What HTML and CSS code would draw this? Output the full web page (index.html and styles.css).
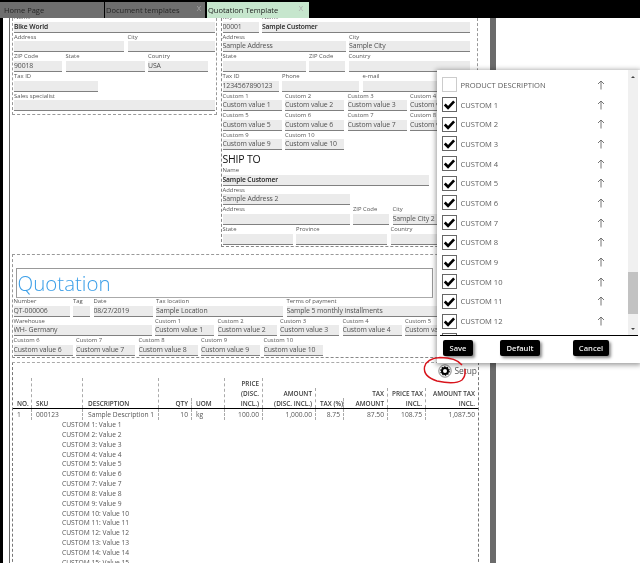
FILE: index.html
```html
<!DOCTYPE html>
<html lang="en">
<head>
<meta charset="utf-8">
<title>Quotation Template</title>
<link rel="stylesheet" href="styles.css">
</head>
<body>
<header class="tabs">
  <div class="tab tab-home">Home Page</div>
  <div class="tab tab-docs">Document templates<span class="close">X</span></div>
  <div class="tab tab-active">Quotation Template<span class="close">X</span></div>
</header>
<main class="main">
  <div class="edge-left"></div>
  <div class="page">
    <div class="top">
      <section class="block-left">
        <div class="row"><div class="f w201 strong"><span class="l">Name</span><span class="v">Bike World</span></div></div>
        <div class="row"><div class="f w110"><span class="l">Address</span><span class="v"></span></div><div class="f w87"><span class="l">City</span><span class="v"></span></div></div>
        <div class="row"><div class="f w48"><span class="l">ZIP Code</span><span class="v">90018</span></div><div class="f w79"><span class="l">State</span><span class="v"></span></div><div class="f w60"><span class="l">Country</span><span class="v">USA</span></div></div>
        <div class="row"><div class="f w84"><span class="l">Tax ID</span><span class="v"></span></div></div>
        <div class="row"><div class="f w201"><span class="l">Sales specialist</span><span class="v"></span></div></div>
      </section>
      <section class="block-right">
        <div class="row"><div class="f w36"><span class="l">Key</span><span class="v">00001</span></div><div class="f w208 strong"><span class="l">Name</span><span class="v">Sample Customer</span></div></div>
        <div class="row"><div class="f w123"><span class="l">Address</span><span class="v">Sample Address</span></div><div class="f w121"><span class="l">City</span><span class="v">Sample City</span></div></div>
        <div class="row"><div class="f w83"><span class="l">State</span><span class="v"></span></div><div class="f w36"><span class="l">ZIP Code</span><span class="v"></span></div><div class="f w121"><span class="l">Country</span><span class="v"></span></div></div>
        <div class="row"><div class="f w56"><span class="l">Tax ID</span><span class="v">1234567890123</span></div><div class="f w77"><span class="l">Phone</span><span class="v"></span></div><div class="f w108"><span class="l">e-mail</span><span class="v"></span></div></div>
        <div class="row"><div class="f w59"><span class="l">Custom 1</span><span class="v">Custom value 1</span></div><div class="f w59"><span class="l">Custom 2</span><span class="v">Custom value 2</span></div><div class="f w59"><span class="l">Custom 3</span><span class="v">Custom value 3</span></div><div class="f w59"><span class="l">Custom 4</span><span class="v">Custom value 4</span></div></div>
        <div class="row"><div class="f w59"><span class="l">Custom 5</span><span class="v">Custom value 5</span></div><div class="f w59"><span class="l">Custom 6</span><span class="v">Custom value 6</span></div><div class="f w59"><span class="l">Custom 7</span><span class="v">Custom value 7</span></div><div class="f w59"><span class="l">Custom 8</span><span class="v">Custom value 8</span></div></div>
        <div class="row"><div class="f w59"><span class="l">Custom 9</span><span class="v">Custom value 9</span></div><div class="f w59"><span class="l">Custom 10</span><span class="v">Custom value 10</span></div></div>
        <h2 class="ship">SHIP TO</h2>
        <div class="row"><div class="f w206 strong"><span class="l">Name</span><span class="v">Sample Customer</span></div></div>
        <div class="row"><div class="f w127"><span class="l">Address</span><span class="v">Sample Address 2</span></div></div>
        <div class="row"><div class="f w127"><span class="l">Address</span><span class="v"></span></div><div class="f w36"><span class="l">ZIP Code</span><span class="v"></span></div><div class="f w60"><span class="l">City</span><span class="v">Sample City 2</span></div></div>
        <div class="row"><div class="f w70"><span class="l">State</span><span class="v"></span></div><div class="f w91"><span class="l">Province</span><span class="v"></span></div><div class="f w60"><span class="l">Country</span><span class="v"></span></div></div>
      </section>
    </div>
    <section class="quote">
      <div class="title-box"><h1 class="title">Quotation</h1></div>
      <div class="row"><div class="f w56"><span class="l">Number</span><span class="v">QT-000006</span></div><div class="f w17"><span class="l">Tag</span><span class="v"></span></div><div class="f w59"><span class="l">Date</span><span class="v">08/27/2019</span></div><div class="f w127"><span class="l">Tax location</span><span class="v">Sample Location</span></div><div class="f w178"><span class="l">Terms of payment</span><span class="v">Sample 5 monthly installments</span></div></div>
      <div class="row"><div class="f w138"><span class="l">Warehouse</span><span class="v">WH- Germany</span></div><div class="f w59"><span class="l">Custom 1</span><span class="v">Custom value 1</span></div><div class="f w59"><span class="l">Custom 2</span><span class="v">Custom value 2</span></div><div class="f w59"><span class="l">Custom 3</span><span class="v">Custom value 3</span></div><div class="f w59"><span class="l">Custom 4</span><span class="v">Custom value 4</span></div><div class="f w59"><span class="l">Custom 5</span><span class="v">Custom value 5</span></div></div>
      <div class="row"><div class="f w59"><span class="l">Custom 6</span><span class="v">Custom value 6</span></div><div class="f w59"><span class="l">Custom 7</span><span class="v">Custom value 7</span></div><div class="f w59"><span class="l">Custom 8</span><span class="v">Custom value 8</span></div><div class="f w59"><span class="l">Custom 9</span><span class="v">Custom value 9</span></div><div class="f w59"><span class="l">Custom 10</span><span class="v">Custom value 10</span></div></div>
    </section>
    <section class="lines">
      <div class="setup">
        <svg class="gear" viewBox="0 0 14 14" width="14" height="14" aria-hidden="true"><circle cx="7" cy="7" r="6.2" fill="none" stroke="#666" stroke-width=".8"/><circle cx="7" cy="7" r="3" fill="none" stroke="#000" stroke-width="2"/><circle cx="7" cy="7" r="4.3" fill="none" stroke="#000" stroke-width="1.1" stroke-dasharray="1.35 1.35"/></svg>
        <span>Setup</span>
      </div>
      <div class="grid head">
        <div class="c">NO.</div><div class="c">SKU</div><div class="c desc">DESCRIPTION</div><div class="c r">QTY</div><div class="c">UOM</div><div class="c r">PRICE<br>(DISC.<br>INCL.)</div><div class="c r">AMOUNT<br>(DISC. INCL.)</div><div class="c r">TAX (%)</div><div class="c r">TAX<br>AMOUNT</div><div class="c r">PRICE TAX<br>INCL.</div><div class="c r">AMOUNT TAX<br>INCL.</div>
      </div>
      <div class="grid body-row">
        <div class="c">1</div><div class="c">000123</div><div class="c desc">Sample Description 1</div><div class="c r">10</div><div class="c">kg</div><div class="c r">100.00</div><div class="c r">1,000.00</div><div class="c r">8.75</div><div class="c r">87.50</div><div class="c r">108.75</div><div class="c r">1,087.50</div>
      </div>
      <ul class="customs">
        <li>CUSTOM 1: Value 1</li><li>CUSTOM 2: Value 2</li><li>CUSTOM 3: Value 3</li><li>CUSTOM 4: Value 4</li><li>CUSTOM 5: Value 5</li><li>CUSTOM 6: Value 6</li><li>CUSTOM 7: Value 7</li><li>CUSTOM 8: Value 8</li><li>CUSTOM 9: Value 9</li><li>CUSTOM 10: Value 10</li><li>CUSTOM 11: Value 11</li><li>CUSTOM 12: Value 12</li><li>CUSTOM 13: Value 13</li><li>CUSTOM 14: Value 14</li><li>CUSTOM 15: Value 15</li>
      </ul>
    </section>
  </div>
  <div class="edge-right"></div>
</main>

<aside class="popup">
  <div class="list-wrap">
    <ul class="list">
      <li class="item"><span class="box"></span><span class="name">PRODUCT DESCRIPTION</span><svg class="up" viewBox="0 0 8 10" width="8" height="10"><path d="M4 9.5V1M1 4l3-3 3 3"/></svg></li>
      <li class="item"><span class="box"><svg viewBox="0 0 15 15"><path d="M2 7.500l3.800 3.800 7-7.500"/></svg></span><span class="name">CUSTOM 1</span><svg class="up" viewBox="0 0 8 10" width="8" height="10"><path d="M4 9.5V1M1 4l3-3 3 3"/></svg></li>
      <li class="item"><span class="box"><svg viewBox="0 0 15 15"><path d="M2 7.500l3.800 3.800 7-7.500"/></svg></span><span class="name">CUSTOM 2</span><svg class="up" viewBox="0 0 8 10" width="8" height="10"><path d="M4 9.5V1M1 4l3-3 3 3"/></svg></li>
      <li class="item"><span class="box"><svg viewBox="0 0 15 15"><path d="M2 7.500l3.800 3.800 7-7.500"/></svg></span><span class="name">CUSTOM 3</span><svg class="up" viewBox="0 0 8 10" width="8" height="10"><path d="M4 9.5V1M1 4l3-3 3 3"/></svg></li>
      <li class="item"><span class="box"><svg viewBox="0 0 15 15"><path d="M2 7.500l3.800 3.800 7-7.500"/></svg></span><span class="name">CUSTOM 4</span><svg class="up" viewBox="0 0 8 10" width="8" height="10"><path d="M4 9.5V1M1 4l3-3 3 3"/></svg></li>
      <li class="item"><span class="box"><svg viewBox="0 0 15 15"><path d="M2 7.500l3.800 3.800 7-7.500"/></svg></span><span class="name">CUSTOM 5</span><svg class="up" viewBox="0 0 8 10" width="8" height="10"><path d="M4 9.5V1M1 4l3-3 3 3"/></svg></li>
      <li class="item"><span class="box"><svg viewBox="0 0 15 15"><path d="M2 7.500l3.800 3.800 7-7.500"/></svg></span><span class="name">CUSTOM 6</span><svg class="up" viewBox="0 0 8 10" width="8" height="10"><path d="M4 9.5V1M1 4l3-3 3 3"/></svg></li>
      <li class="item"><span class="box"><svg viewBox="0 0 15 15"><path d="M2 7.500l3.800 3.800 7-7.500"/></svg></span><span class="name">CUSTOM 7</span><svg class="up" viewBox="0 0 8 10" width="8" height="10"><path d="M4 9.5V1M1 4l3-3 3 3"/></svg></li>
      <li class="item"><span class="box"><svg viewBox="0 0 15 15"><path d="M2 7.500l3.800 3.800 7-7.500"/></svg></span><span class="name">CUSTOM 8</span><svg class="up" viewBox="0 0 8 10" width="8" height="10"><path d="M4 9.5V1M1 4l3-3 3 3"/></svg></li>
      <li class="item"><span class="box"><svg viewBox="0 0 15 15"><path d="M2 7.500l3.800 3.800 7-7.500"/></svg></span><span class="name">CUSTOM 9</span><svg class="up" viewBox="0 0 8 10" width="8" height="10"><path d="M4 9.5V1M1 4l3-3 3 3"/></svg></li>
      <li class="item"><span class="box"><svg viewBox="0 0 15 15"><path d="M2 7.500l3.800 3.800 7-7.500"/></svg></span><span class="name">CUSTOM 10</span><svg class="up" viewBox="0 0 8 10" width="8" height="10"><path d="M4 9.5V1M1 4l3-3 3 3"/></svg></li>
      <li class="item"><span class="box"><svg viewBox="0 0 15 15"><path d="M2 7.500l3.800 3.800 7-7.500"/></svg></span><span class="name">CUSTOM 11</span><svg class="up" viewBox="0 0 8 10" width="8" height="10"><path d="M4 9.5V1M1 4l3-3 3 3"/></svg></li>
      <li class="item"><span class="box"><svg viewBox="0 0 15 15"><path d="M2 7.500l3.800 3.800 7-7.500"/></svg></span><span class="name">CUSTOM 12</span><svg class="up" viewBox="0 0 8 10" width="8" height="10"><path d="M4 9.5V1M1 4l3-3 3 3"/></svg></li>
      <li class="item"><span class="box"></span><span class="name"></span></li>
    </ul>
    <div class="scrollbar"><span class="tri tri-up"></span><span class="thumb"></span><span class="tri tri-down"></span></div>
  </div>
  <div class="actions">
    <button class="btn btn-save">Save</button>
    <button class="btn btn-default">Default</button>
    <button class="btn btn-cancel">Cancel</button>
  </div>
</aside>

<svg class="scribble" viewBox="0 0 640 563" aria-hidden="true"><path d="M462 365C458 360 450 357.500 440 357.500C432 358 426 361 424.500 367C423.500 373 428 378 437 381C446 383 457 383.500 462 380C465 377 465.500 373 465 369"/></svg>
</body>
</html>
```
FILE: styles.css
```css
* { box-sizing: border-box; }
html, body { margin: 0; padding: 0; }
body {
  position: relative;
  width: 640px;
  height: 563px;
  overflow: hidden;
  background: #fff;
  font-family: "Open Sans", "Noto Sans", sans-serif;
  color: #555;
}

/* The reference is a soft, upscaled capture */
.tabs, .main, .popup { filter: blur(.3px); }

/* Tabs */
.tabs {
  position: relative;
  z-index: 1;
  display: flex;
  height: 18px;
  padding-top: 2px;
  gap: 1px;
  background: #000;
}
.tab {
  position: relative;
  display: flex;
  align-items: center;
  height: 16px;
  padding-left: 1px;
  font-size: 7.5px;
  color: #262626;
  background: #6e6e6e;
}
.tab-home { width: 104px; padding-left: 4px; }
.tab-docs { width: 100px; }
.tab-active { width: 102px; margin-left: 1px; background: #c6e6cd; color: #1c1c1c; }
.close {
  position: absolute;
  right: 4px;
  top: 0;
  font-size: 7.5px;
  line-height: 12px;
  color: #a9a9a9;
}
.tab-active .close { right: 6px; }

/* Frame */
.main { display: flex; height: 545px; overflow: hidden; }
.edge-left { width: 3px; background: #000; flex: none; }
.page {
  flex: none;
  width: 481px;
  margin-left: 6px;
  margin-top: -6px;
  padding-left: 2px;
  border-left: 1px solid #666;
}
.edge-right { width: 6px; flex: none; background: #6b6b6b; }

/* Field rows */
.row { display: flex; gap: 3.5px; height: 19.65px; align-items: flex-end; flex: none; }
.f { display: flex; flex-direction: column; flex: none; }
.l {
  display: block;
  height: 8.65px;
  line-height: 8.5px;
  font-size: 5.9px;
  color: #555;
  white-space: nowrap;
}
.v {
  display: block;
  height: 11px;
  line-height: 10px;
  font-size: 6.9px;
  letter-spacing: -.1px;
  color: #505050;
  white-space: nowrap;
  overflow: hidden;
  background: #ebebeb;
  border-bottom: 1px solid #808080;
}
.strong .v { color: #222; font-weight: 600; font-size: 6.7px; }
.w17 { width: 17px; } .w36 { width: 36px; } .w48 { width: 48px; } .w56 { width: 56px; }
.w59 { width: 59px; } .w60 { width: 60px; } .w70 { width: 70px; } .w77 { width: 77px; }
.w79 { width: 79px; } .w83 { width: 83px; } .w84 { width: 84px; } .w87 { width: 87px; }
.w91 { width: 91px; } .w108 { width: 108px; } .w110 { width: 110px; } .w121 { width: 121px; }
.w123 { width: 123px; } .w127 { width: 127px; } .w138 { width: 138px; } .w178 { width: 178px; }
.w201 { width: 201px; } .w206 { width: 206px; } .w208 { width: 208px; }

/* Header blocks */
.top { display: flex; align-items: flex-start; gap: 4px; height: 242px; padding-top: 1px; }
.block-left {
  width: 205px;
  height: 102px;
  padding-left: 1px;
  border: 1px dashed #999;
  border-top: 0;
}
.block-right {
  width: 257px;
  height: 234px;
  padding-left: .5px;
  border-left: 1px dashed #888;
  border-right: 1px dashed #999;
  border-bottom: 1px dashed #888;
}
.ship {
  margin: 0;
  height: 15.5px;
  line-height: 19px;
  font-size: 10.5px;
  font-weight: 400;
  color: #111;
  letter-spacing: -.2px;
}

/* Quotation */
.quote {
  width: 466px;
  height: 104px;
  padding: 13px 0 0 .5px;
  border-top: 1px dashed #999;
  border-left: 1px dashed #999;
  border-bottom: 1px dashed #888;
}
.title-box {
  width: 417px;
  height: 30px;
  margin-left: 2px;
  margin-bottom: -1px;
  border: 1px solid #999;
  border-bottom-color: #aaa;
}
.title {
  margin: 0;
  padding-left: 1px;
  font-size: 20.500px;
  line-height: 28px;
  font-weight: 300;
  color: #3c9fe8;
}

/* Lines */
.lines {
  position: relative;
  width: 467px;
  height: 210px;
  margin-top: 4px;
  border-top: 1px dashed #aaa;
  border-left: 1px dashed #777;
  border-right: 1px dashed #777;
}
.setup {
  display: flex;
  align-items: center;
  justify-content: flex-end;
  gap: 2px;
  height: 15px;
  padding-right: 1px;
  font-size: 8.4px;
  color: #555;
}
.gear { flex: none; }
.grid {
  display: grid;
  grid-template-columns: 19px 51px 76px 33px 33px 38px 53px 28px 44px 38px 52px;
  font-size: 6.4px;
}
.head {
  height: 31px;
  align-items: stretch;
  border-bottom: 1.5px solid #000;
  font-weight: 600;
  color: #3c3c3c;
  line-height: 9.800px;
}
.c {
  display: flex;
  flex-direction: column;
  justify-content: flex-end;
  padding: 0 3px 0 4px;
  border-right: 1px dashed #aaa;
  white-space: nowrap;
}
.desc { padding-left: 5px; }
.r { align-items: flex-end; text-align: right; }
.head .c:last-child, .body-row .c:last-child { border-right: 0; }
.head .r { display: block; padding-top: 1px; }
.head .c.r { align-self: end; }
.body-row { height: 11px; line-height: 10px; font-size: 6.7px; color: #555; }
.customs {
  margin: 0;
  padding: 0 0 0 49px;
  list-style: none;
  font-size: 6.7px;
  line-height: 9.85px;
  color: #555;
}

/* Popup */
.popup {
  position: absolute;
  z-index: 2;
  left: 437px;
  top: 70px;
  width: 203px;
  height: 293px;
  background: #fff;
  box-shadow: 0 1px 5px 1px rgba(0, 0, 0, .4);
}
.list-wrap { display: flex; height: 265px; padding-left: 5px; overflow: hidden; }
.list { flex: 1; margin: 0; padding: 5px 0 0; list-style: none; }
.item { display: flex; align-items: center; height: 19.7px; }
.box { flex: none; width: 15px; height: 15px; border: 1px solid #666; background: #fff; }
.item:first-child .box { border-color: #ccc; }
.box svg { display: block; width: 13px; height: 13px; }
.box path { fill: none; stroke: #000; stroke-width: 3; }
.name { flex: 1; margin-left: 3.5px; font-size: 7.6px; color: #5c5c5c; white-space: nowrap; }
.up { flex: none; margin-right: 23px; }
.up path { fill: none; stroke: #666; stroke-width: .9; }
.scrollbar {
  position: relative;
  flex: none;
  width: 10px;
  margin-right: 2px;
  background: #f0f0f0;
}
.thumb {
  position: absolute;
  left: 0;
  right: 0;
  top: 202px;
  height: 42px;
  background: #c2c2c2;
}
.tri {
  position: absolute;
  left: 3px;
  width: 0;
  height: 0;
  border-left: 2px solid transparent;
  border-right: 2px solid transparent;
}
.tri-up { top: 6px; border-bottom: 2px solid #444; }
.tri-down { bottom: 5px; border-top: 2px solid #444; }
.actions {
  display: flex;
  align-items: flex-start;
  margin: 0 2px 0 3px;
  padding: 4px 0 0 3px;
  border-top: 1.5px solid #000;
}
.btn {
  height: 16px;
  padding: 0;
  border: 0;
  border-radius: 2px;
  font: 600 7.6px "Open Sans", "Noto Sans", sans-serif;
  color: #eee;
  background: #000;
  box-shadow: 2px 2px 3px rgba(0, 0, 0, .45);
}
.btn-save { width: 30px; }
.btn-default { width: 40px; margin-left: 27px; }
.btn-cancel { width: 36px; margin-left: 33px; }

/* Hand-drawn annotation over the screenshot */
.scribble { position: absolute; z-index: 3; inset: 0; width: 640px; height: 563px; pointer-events: none; }
.scribble path { fill: none; stroke: #d8141c; stroke-width: 1.4; }
```
